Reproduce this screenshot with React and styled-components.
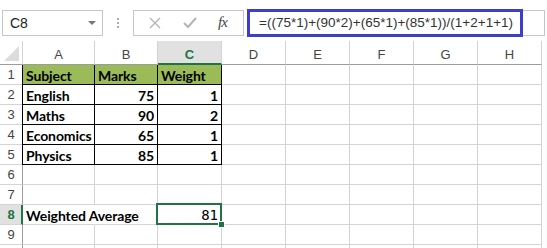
import React from 'react'
import styled, { createGlobalStyle, css } from 'styled-components'

const GlobalStyle = createGlobalStyle`
  body {
    margin: 0;
    background: #fff;
    font-family: 'Lato', 'Liberation Sans', sans-serif;
  }
`

const Page = styled.div`
  width: 547px;
  height: 248px;
  overflow: hidden;
  background: #fff;
`

const Bar = styled.div`
  display: flex;
  align-items: center;
  height: 27px;
  padding: 9px 2px 0 2px;
`

const NameBox = styled.div`
  box-sizing: border-box;
  width: 101px;
  height: 26px;
  border: 1px solid #c6c6c6;
  display: flex;
  align-items: center;
  justify-content: space-between;
  padding: 0 6px 0 7px;
  font-family: 'Liberation Sans', sans-serif;
  font-size: 14px;
  color: #222;
`

const Caret = styled.span`
  width: 0;
  height: 0;
  border-left: 4px solid transparent;
  border-right: 4px solid transparent;
  border-top: 4px solid #777;
`

const Grip = styled.div`
  display: flex;
  flex-direction: column;
  gap: 2px;
  margin: 0 14px;
  span {
    width: 2px;
    height: 2px;
    background: #aaa;
  }
`

const FxBox = styled.div`
  box-sizing: border-box;
  width: 111px;
  height: 26px;
  border: 1px solid #c6c6c6;
  display: flex;
  align-items: center;
  justify-content: space-around;
  padding: 0 6px 0 4px;
`

const Fx = styled.span`
  font-family: 'Liberation Serif', serif;
  font-style: italic;
  font-size: 15px;
  color: #444;
  letter-spacing: -1px;
`

const FormulaInput = styled.div`
  box-sizing: border-box;
  flex: 1;
  height: 26px;
  margin-left: 3px;
  border: 1px solid #c6c6c6;
  border-left: none;
  display: flex;
  align-items: center;
`

const Highlight = styled.div`
  box-sizing: border-box;
  height: 28px;
  width: 276px;
  margin: -1px 0;
  border: 3px solid #3b3fcb;
  display: flex;
  align-items: center;
  padding-left: 9px;
  font-family: 'Liberation Sans', sans-serif;
  font-size: 13.5px;
  color: #333;
  white-space: nowrap;
`

const Sheet = styled.div`
  display: grid;
  grid-template-columns: 23px 72px 63px 64px repeat(5, 64px);
  grid-template-rows: 24px repeat(10, 20px);
  margin-top: 5px;
`

const headBase = css`
  box-sizing: border-box;
  display: flex;
  align-items: center;
  justify-content: center;
  font-family: 'Liberation Sans', sans-serif;
  font-size: 13px;
  color: #444;
`

const Corner = styled.div`
  ${headBase};
  border-right: 1px solid #d4d4d4;
  border-bottom: 1px solid #9c9c9c;
  align-items: flex-end;
  justify-content: flex-end;
  padding: 0 3px 3px 0;
`

const ColHead = styled.div`
  ${headBase};
  border-right: 1px solid #d4d4d4;
  border-bottom: 1px solid #9c9c9c;
  padding-top: 3px;
  ${p => p.$active && css`
    background: #e1e1e1;
    color: #217346;
    font-weight: bold;
    border-bottom: 2px solid #217346;
    padding-top: 4px;
  `}
`

const RowHead = styled.div`
  ${headBase};
  border-right: 1px solid #9c9c9c;
  border-bottom: 1px solid #d4d4d4;
  ${p => p.$active && css`
    background: #e1e1e1;
    color: #217346;
    font-weight: bold;
    border-right: 2px solid #217346;
    padding-left: 1px;
  `}
`

const Cell = styled.div`
  position: relative;
  box-sizing: border-box;
  display: flex;
  align-items: center;
  justify-content: ${p => (p.$right ? 'flex-end' : 'flex-start')};
  padding: 1px 3px 0 3px;
  border-right: 1px solid ${p => (p.$box ? '#000' : '#d4d4d4')};
  border-bottom: 1px solid ${p => (p.$box ? '#000' : '#d4d4d4')};
  background: ${p => (p.$fill ? '#9bbb59' : 'transparent')};
  font-size: 14px;
  letter-spacing: -0.1px;
  font-weight: ${p => (p.$bold ? 700 : 400)};
  color: #000;
  white-space: nowrap;
  ${p => p.$edge && css`box-shadow: -1px 0 0 #000;`}
  ${p => p.$mono && css`
    font-family: 'DejaVu Sans Mono', 'Liberation Mono', monospace;
    font-size: 14px;
    letter-spacing: 0;
    font-weight: 400;
  `}
  ${p => p.$overflow && css`
    overflow: visible;
    z-index: 1;
    border-right-color: transparent;
  `}
  ${p => p.$selected && css`
    &::after {
      content: '';
      position: absolute;
      left: -2px;
      top: -2px;
      right: -1px;
      bottom: -1px;
      border: 2px solid #217346;
    }
    &::before {
      content: '';
      position: absolute;
      right: -4px;
      bottom: -4px;
      width: 5px;
      height: 5px;
      background: #217346;
      border: 1px solid #fff;
      z-index: 2;
    }
  `}
`

const cols = ['A', 'B', 'C', 'D', 'E', 'F', 'G', 'H']

const table = [
  ['Subject', 'Marks', 'Weight'],
  ['English', 75, 1],
  ['Maths', 90, 2],
  ['Economics', 65, 1],
  ['Physics', 85, 1],
]

const CornerMark = () => (
  <svg width="15" height="15" viewBox="0 0 15 15">
    <polygon points="15,0 15,15 0,15" fill="#dcdcdc" />
  </svg>
)

const Cross = () => (
  <svg width="14" height="14" viewBox="0 0 14 14">
    <path d="M2 2 L12 12 M12 2 L2 12" stroke="#b4b4b4" strokeWidth="1.4" />
  </svg>
)

const Check = () => (
  <svg width="16" height="14" viewBox="0 0 16 14">
    <path d="M2 7 L6 11 L14 2" stroke="#b4b4b4" strokeWidth="2" fill="none" />
  </svg>
)

const renderRow = r => {
  const cells = []
  for (let c = 0; c < cols.length; c++) {
    const key = `${r}-${c}`
    if (r <= 5 && c < 3) {
      const v = table[r - 1][c]
      cells.push(
        <Cell key={key} $box $bold $fill={r === 1} $edge={c === 0} $right={r > 1 && c > 0}>
          {v}
        </Cell>
      )
    } else if (r === 8 && c === 0) {
      cells.push(<Cell key={key} $bold $overflow>Weighted Average</Cell>)
    } else if (r === 8 && c === 2) {
      cells.push(<Cell key={key} $right $mono $selected>81</Cell>)
    } else {
      cells.push(<Cell key={key} />)
    }
  }
  return cells
}

export default function App() {
  const rows = Array.from({ length: 10 }, (_, i) => i + 1)
  return (
    <Page>
      <GlobalStyle />
      <Bar>
        <NameBox>
          C8
          <Caret />
        </NameBox>
        <Grip>
          <span />
          <span />
          <span />
        </Grip>
        <FxBox>
          <Cross />
          <Check />
          <Fx>fx</Fx>
        </FxBox>
        <FormulaInput>
          <Highlight>=((75*1)+(90*2)+(65*1)+(85*1))/(1+2+1+1)</Highlight>
        </FormulaInput>
      </Bar>
      <Sheet>
        <Corner>
          <CornerMark />
        </Corner>
        {cols.map(c => (
          <ColHead key={c} $active={c === 'C'}>{c}</ColHead>
        ))}
        {rows.map(r => (
          <React.Fragment key={r}>
            {/* row 10 only peeks in at the bottom edge, so no label */}
            <RowHead $active={r === 8}>{r < 10 ? r : null}</RowHead>
            {renderRow(r)}
          </React.Fragment>
        ))}
      </Sheet>
    </Page>
  )
}
